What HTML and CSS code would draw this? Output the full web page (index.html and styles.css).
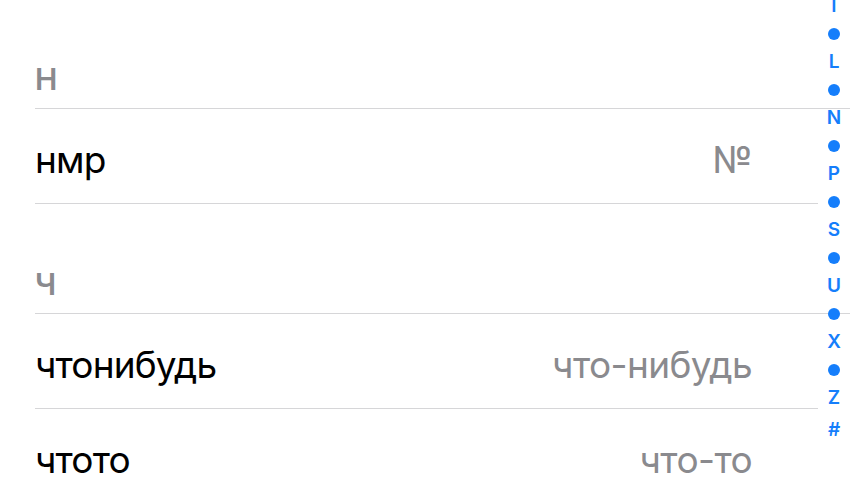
FILE: index.html
```html
<!DOCTYPE html>
<html lang="ru">
<head>
<meta charset="utf-8">
<link rel="stylesheet" href="styles.css">
</head>
<body>
<div class="screen">
  <div class="list">
    <div class="section-header"><span>Н</span></div>
    <div class="row"><span class="title">нмр</span><span class="detail">№</span></div>
    <div class="section-header"><span>Ч</span></div>
    <div class="row"><span class="title">чтонибудь</span><span class="detail">что-нибудь</span></div>
    <div class="row"><span class="title">чтото</span><span class="detail">что-то</span></div>
  </div>
  <div class="index">
    <span class="letter">I</span><span class="dot"></span>
    <span class="letter">L</span><span class="dot"></span>
    <span class="letter">N</span><span class="dot"></span>
    <span class="letter">P</span><span class="dot"></span>
    <span class="letter">S</span><span class="dot"></span>
    <span class="letter">U</span><span class="dot"></span>
    <span class="letter">X</span><span class="dot"></span>
    <span class="letter">Z</span>
    <span class="letter hash">#</span>
  </div>
</div>
</body>
</html>
```

FILE: styles.css
```css
html, body {
  margin: 0;
  padding: 0;
  background: #ffffff;
}
body {
  width: 850px;
  height: 503px;
  overflow: hidden;
  font-family: Inter, "Noto Sans", "DejaVu Sans", sans-serif;
}
.screen {
  position: relative;
  width: 850px;
  height: 503px;
  overflow: hidden;
}
.list {
  margin-top: -1px;
  padding-left: 35px;
}
.section-header {
  height: 109px;
  border-bottom: 1px solid #d6d6d8;
  display: flex;
  align-items: flex-end;
  box-sizing: content-box;
}
.section-header span {
  font-size: 30px;
  font-weight: 600;
  color: #8a8a8e;
  line-height: 1;
  padding-bottom: 14px;
}
.row {
  margin-right: 32px;
  border-bottom: 1px solid #d6d6d8;
  display: flex;
  align-items: center;
  justify-content: space-between;
  padding-right: 66px;
  padding-top: 6px;
  box-sizing: border-box;
  height: 95px;
}
.title {
  font-size: 37px;
  color: #000000;
  letter-spacing: -0.85px;
}
.detail {
  font-size: 37px;
  color: #8a8a8e;
  letter-spacing: -0.6px;
}
.index {
  position: absolute;
  top: -8px;
  right: 1px;
  width: 30px;
  display: flex;
  flex-direction: column;
  align-items: center;
}
.letter {
  height: 28px;
  line-height: 28px;
  font-size: 19px;
  font-weight: 600;
  color: #157efb;
}
.hash {
  margin-top: 4px;
}
.dot {
  width: 12px;
  height: 12px;
  margin: 8px 0;
  border-radius: 50%;
  background: #157efb;
}
```
